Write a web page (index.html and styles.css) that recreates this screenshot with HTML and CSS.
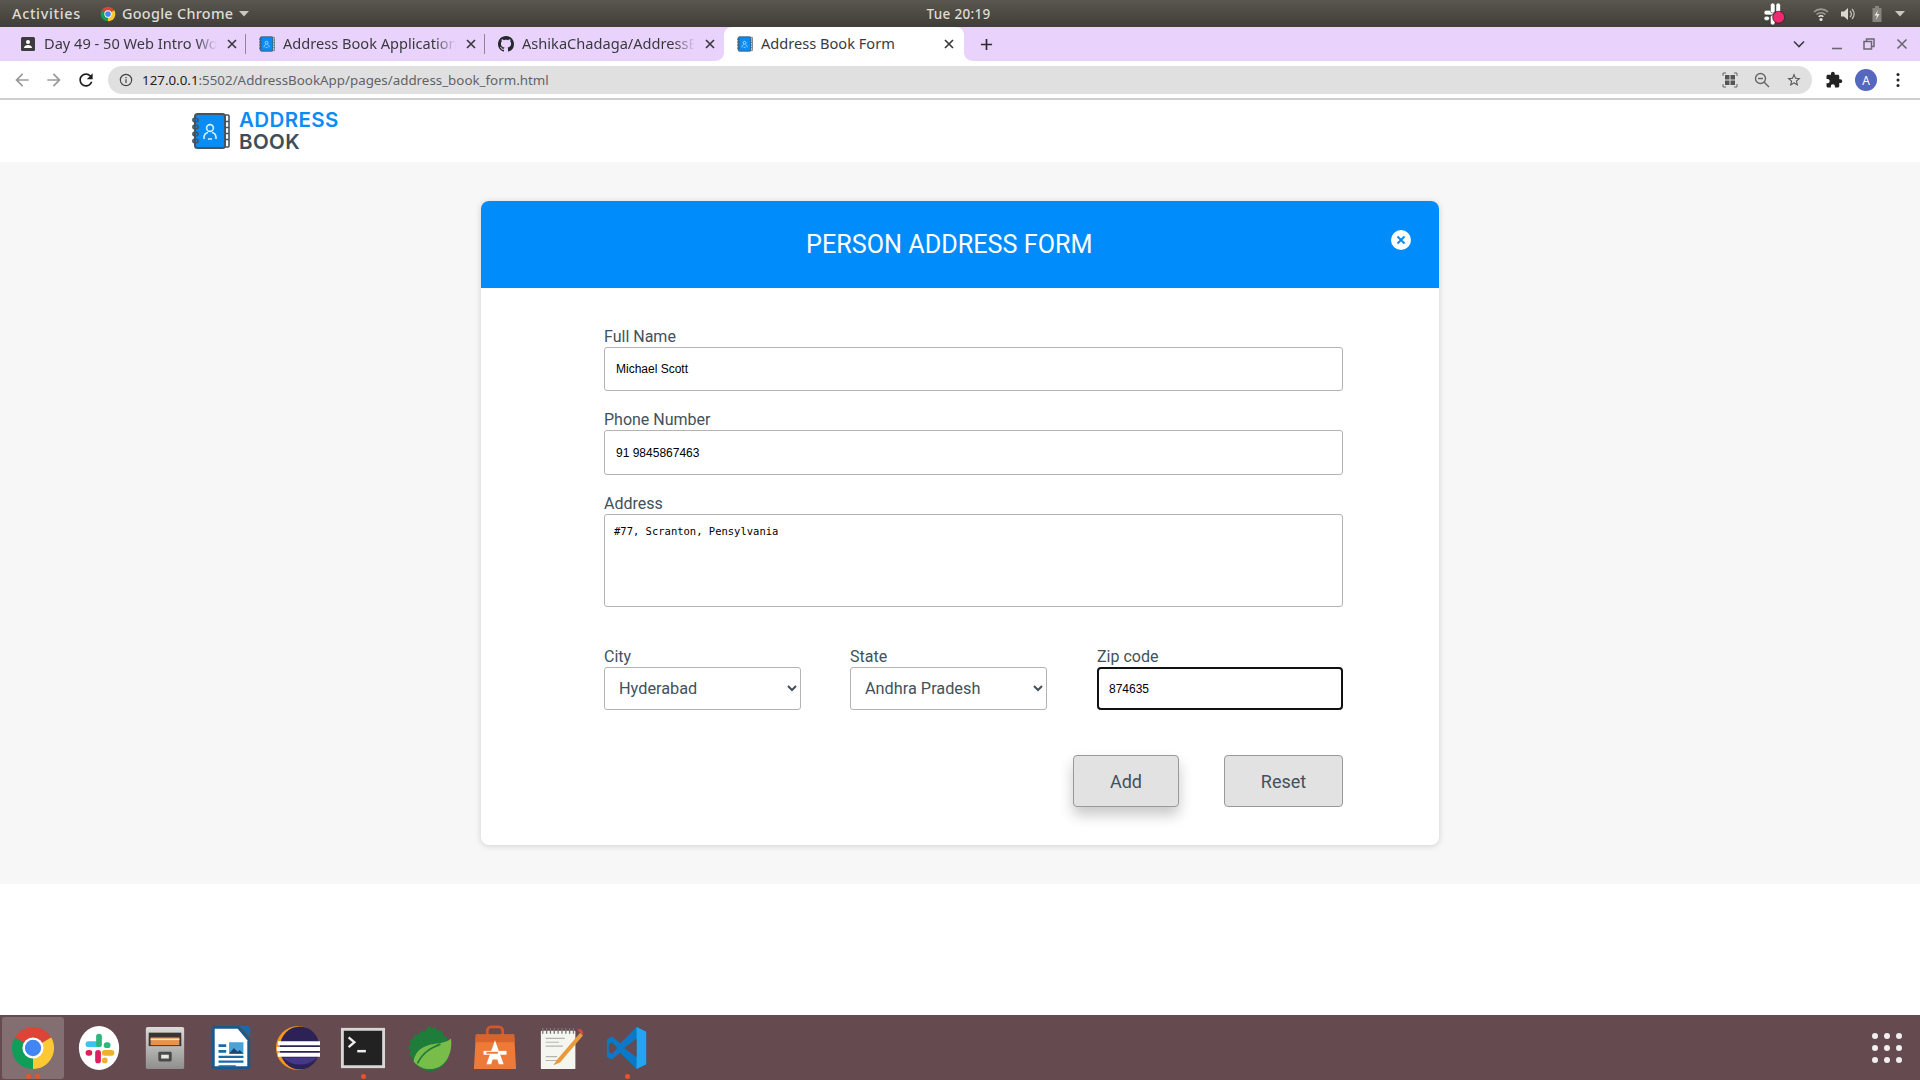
FILE: index.html
```html
<!DOCTYPE html>
<html lang="en">
<head>
<meta charset="utf-8">
<title>Address Book Form</title>
<link rel="stylesheet" href="styles.css">
</head>
<body>
<svg class="defs" width="0" height="0" aria-hidden="true">
  <symbol id="book" viewBox="0 0 38 36">
    <rect x="32" y="2" width="5" height="32" rx="1" fill="#fff" stroke="#46545f" stroke-width="1.6"/>
    <path d="M32 8.5h5M32 14.5h5M32 20.5h5M32 26.5h5" stroke="#46545f" stroke-width="1.4"/>
    <rect x="3" y="1" width="30" height="34" rx="2.5" fill="#0a8cf5" stroke="#46545f" stroke-width="2"/>
    <g fill="none" stroke="#46545f" stroke-width="1.6">
      <ellipse cx="3.5" cy="7" rx="2.6" ry="2"/>
      <ellipse cx="3.5" cy="14" rx="2.6" ry="2"/>
      <ellipse cx="3.5" cy="21" rx="2.6" ry="2"/>
      <ellipse cx="3.5" cy="28" rx="2.6" ry="2"/>
    </g>
    <g fill="none" stroke="#d8f0ff" stroke-width="1.6">
      <circle cx="18" cy="15" r="3.4"/>
      <path d="M12 26v-1.500c0-2.500 2-4.500 4-5M24 26v-1.500c0-2.500-2-4.500-4-5M16 26h4"/>
    </g>
  </symbol>
  <symbol id="chrome" viewBox="0 0 48 48">
    <path d="M24 24L5 13A22 22 0 0 1 43 13Z" fill="#db4437"/>
    <path d="M24 24L43 13A22 22 0 0 1 24 46Z" fill="#fcc934"/>
    <path d="M24 24L24 46A22 22 0 0 1 5 13Z" fill="#0f9d58"/>
    <circle cx="24" cy="24" r="11" fill="#fff"/>
    <circle cx="24" cy="24" r="8.500" fill="#4285f4"/>
  </symbol>
  <symbol id="close" viewBox="0 0 10 10">
    <path d="M1 1l8 8M9 1l-8 8" stroke="currentColor" stroke-width="1.700" fill="none"/>
  </symbol>
</svg>

<div class="screen">
  <header class="topbar">
    <div class="top-left">
      <span class="top-label activities">Activities</span>
      <span class="app-menu">
        <svg class="app-icon"><use href="#chrome"/></svg>
        <span class="top-label app-name">Google Chrome</span>
        <svg class="caret" viewBox="0 0 10 6"><path d="M0 0h10L5 5.500z" fill="#c9c7c0"/></svg>
      </span>
    </div>
    <span class="top-label clock">Tue 20:19</span>
    <div class="top-right">
      <svg class="tray-slack" viewBox="0 0 24 24">
        <g fill="#fff" stroke="#222" stroke-width=".5">
          <rect x="0" y="8" width="11" height="5" rx="2.500"/>
          <rect x="7" y="0" width="5" height="11" rx="2.500"/>
          <rect x="13" y="0" width="5" height="11" rx="2.500"/>
          <rect x="7" y="13" width="5" height="11" rx="2.500"/>
          <rect x="0" y="14.500" width="6" height="4.500" rx="2.200"/>
        </g>
        <circle cx="16" cy="15.500" r="6.500" fill="#f0286f" stroke="#222" stroke-width=".8"/>
      </svg>
      <svg class="tray wifi" viewBox="0 0 16 16">
        <path d="M1 6a10 10 0 0 1 14 0M3.500 8.500a6.500 6.500 0 0 1 9 0" fill="none" stroke="#9b9a94" stroke-width="1.600"/>
        <path d="M5.700 10.700a3.200 3.200 0 0 1 4.600 0" fill="none" stroke="#e6e5e0" stroke-width="1.600"/>
        <circle cx="8" cy="13.500" r="1.600" fill="#e6e5e0"/>
      </svg>
      <svg class="tray sound" viewBox="0 0 16 16">
        <path d="M1 5.500v5h3l4 3.500V2L4 5.500z" fill="#d9d8d2"/>
        <path d="M10 5a4 4 0 0 1 0 6M12 3a7 7 0 0 1 0 10" fill="none" stroke="#bdbcb6" stroke-width="1.300"/>
      </svg>
      <svg class="tray battery" viewBox="0 0 16 16">
        <path d="M6 0h4v2h2.500v14h-9V2H6z" fill="#85847e"/>
        <path d="M9 4L5.500 9.500H8L7 14l3.500-6H8z" fill="#e8e7e2"/>
      </svg>
      <svg class="caret" viewBox="0 0 10 6"><path d="M0 0h10L5 5.500z" fill="#c9c7c0"/></svg>
    </div>
  </header>

  <nav class="tabstrip">
    <div class="tab sep">
      <svg class="favicon" viewBox="0 0 16 16">
        <rect x="1" y="1" width="14" height="14" rx="1.500" fill="#3b3b3f"/>
        <circle cx="8" cy="6" r="2" fill="#fff"/>
        <path d="M4 12c0-2 2-3 4-3s4 1 4 3z" fill="#fff"/>
      </svg>
      <span class="tab-title">Day 49 - 50 Web Intro Wor</span>
      <svg class="tab-close"><use href="#close"/></svg>
    </div>
    <div class="tab sep">
      <svg class="favicon"><use href="#book"/></svg>
      <span class="tab-title">Address Book Application</span>
      <svg class="tab-close"><use href="#close"/></svg>
    </div>
    <div class="tab">
      <svg class="favicon" viewBox="0 0 16 16"><path fill="#24292e" d="M8 0C3.580 0 0 3.580 0 8c0 3.540 2.290 6.530 5.470 7.590.4.070.55-.17.55-.38 0-.19-.01-.82-.01-1.490-2.010.37-2.530-.49-2.690-.94-.09-.23-.48-.94-.82-1.130-.28-.15-.68-.52-.01-.53.63-.01 1.080.58 1.230.82.72 1.210 1.870.87 2.330.66.070-.52.28-.87.51-1.070-1.780-.2-3.640-.89-3.640-3.950 0-.87.31-1.590.82-2.150-.08-.2-.36-1.020.08-2.120 0 0 .67-.21 2.200.82.64-.18 1.320-.27 2-.27.68 0 1.360.09 2 .27 1.530-1.040 2.200-.82 2.200-.82.44 1.100.16 1.920.08 2.120.51.56.82 1.270.82 2.150 0 3.070-1.870 3.750-3.650 3.950.29.25.54.73.54 1.480 0 1.070-.01 1.930-.01 2.200 0 .21.15.46.55.38A8.013 8.013 0 0016 8c0-4.420-3.580-8-8-8z"/></svg>
      <span class="tab-title">AshikaChadaga/AddressB</span>
      <svg class="tab-close"><use href="#close"/></svg>
    </div>
    <div class="tab active">
      <svg class="favicon"><use href="#book"/></svg>
      <span class="tab-title">Address Book Form</span>
      <svg class="tab-close"><use href="#close"/></svg>
    </div>
    <svg class="new-tab" viewBox="0 0 14 14"><path d="M7 1v12M1 7h12" stroke="#2b2b30" stroke-width="1.800"/></svg>
    <div class="win-controls">
      <svg class="win-chevron" viewBox="0 0 12 8"><path d="M1 1.500l5 5 5-5" fill="none" stroke="#3c3c42" stroke-width="1.600"/></svg>
      <svg class="win-btn min" viewBox="0 0 12 12"><path d="M1 10.500h10" stroke="#6b6770" stroke-width="1.600"/></svg>
      <svg class="win-btn restore" viewBox="0 0 12 12"><path d="M3.500 3.500V1h7.500v7.500H8.500M1 3.500h7.500V11H1z" fill="none" stroke="#6b6770" stroke-width="1.500"/></svg>
      <svg class="win-btn closer" viewBox="0 0 12 12"><path d="M1.500 1.500l9 9M10.500 1.500l-9 9" stroke="#6b6770" stroke-width="1.600"/></svg>
    </div>
  </nav>

  <div class="toolbar">
    <svg class="nav-icon" viewBox="0 0 24 24"><path fill="#9a9a9a" d="M20 11H7.830l5.590-5.590L12 4l-8 8 8 8 1.410-1.410L7.830 13H20v-2z"/></svg>
    <svg class="nav-icon" viewBox="0 0 24 24"><path fill="#9a9a9a" d="M4 11h12.170l-5.590-5.590L12 4l8 8-8 8-1.410-1.410L16.170 13H4v-2z"/></svg>
    <svg class="nav-icon" viewBox="0 0 24 24"><path fill="#1f1f1f" d="M17.650 6.350C16.200 4.900 14.210 4 12 4c-4.420 0-7.990 3.580-7.990 8s3.570 8 7.990 8c3.730 0 6.840-2.550 7.730-6h-2.080c-.82 2.330-3.040 4-5.650 4-3.310 0-6-2.690-6-6s2.690-6 6-6c1.660 0 3.140.69 4.220 1.780L13 11h7V4l-2.350 2.350z"/></svg>
    <div class="omnibox">
      <svg class="info" viewBox="0 0 16 16"><circle cx="8" cy="8" r="6.500" fill="none" stroke="#444" stroke-width="1.300"/><path d="M8 7v4.500M8 4.500v1.400" stroke="#444" stroke-width="1.400"/></svg>
      <span class="url"><span class="url-host">127.0.0.1</span>:5502/AddressBookApp/pages/address_book_form.html</span>
      <svg class="omni-icon" viewBox="0 0 16 16">
        <path d="M1 4V1h3M12 1h3v3M15 12v3h-3M4 15H1v-3" fill="none" stroke="#666" stroke-width="1"/>
        <rect x="3" y="3" width="4.500" height="4.500" fill="#555"/><rect x="8.500" y="3" width="4.500" height="4.500" fill="#555"/>
        <rect x="3" y="8.500" width="4.500" height="4.500" fill="#555"/><rect x="8.500" y="8.500" width="4.500" height="4.500" fill="#555"/>
      </svg>
      <svg class="omni-icon" viewBox="0 0 16 16"><circle cx="6.500" cy="6.500" r="5" fill="none" stroke="#666" stroke-width="1.400"/><path d="M4 6.500h5M10.200 10.200L15 15" stroke="#666" stroke-width="1.400"/></svg>
      <svg class="omni-icon" viewBox="0 0 24 24"><path fill="#555" d="M22 9.240l-7.190-.62L12 2 9.190 8.630 2 9.240l5.460 4.730L5.820 21 12 17.270 18.180 21l-1.630-7.030L22 9.240zM12 15.400l-3.760 2.270 1-4.280-3.320-2.880 4.380-.38L12 6.100l1.710 4.040 4.380.38-3.320 2.880 1 4.280L12 15.400z"/></svg>
    </div>
    <svg class="puzzle" viewBox="0 0 24 24"><path fill="#222" d="M20.500 11H19V7c0-1.100-.9-2-2-2h-4V3.500C13 2.120 11.880 1 10.500 1S8 2.120 8 3.500V5H4c-1.100 0-1.990.9-1.990 2v3.800H3.500c1.490 0 2.700 1.210 2.700 2.700s-1.210 2.700-2.700 2.700H2V20c0 1.100.9 2 2 2h3.800v-1.500c0-1.490 1.210-2.700 2.700-2.700 1.490 0 2.700 1.210 2.700 2.700V22H17c1.100 0 2-.9 2-2v-4h1.500c1.380 0 2.500-1.120 2.500-2.500S21.880 11 20.500 11z"/></svg>
    <span class="avatar">A</span>
    <svg class="kebab" viewBox="0 0 4 16"><circle cx="2" cy="2.500" r="1.500" fill="#222"/><circle cx="2" cy="8" r="1.500" fill="#222"/><circle cx="2" cy="13.500" r="1.500" fill="#222"/></svg>
  </div>

  <div class="site-header">
    <svg class="logo-icon"><use href="#book"/></svg>
    <div class="logo-text">
      <span class="logo-a">ADDRESS</span>
      <span class="logo-b">BOOK</span>
    </div>
  </div>

  <main class="page">
    <section class="card">
      <div class="card-head">
        <h1 class="card-title">PERSON ADDRESS FORM</h1>
        <svg class="card-close" viewBox="0 0 20 20">
          <circle cx="10" cy="10" r="10" fill="#fff"/>
          <path d="M6.500 6.500l7 7M13.500 6.500l-7 7" stroke="#0a8cf5" stroke-width="2"/>
        </svg>
      </div>
      <form class="form">
        <div class="field field-name">
          <label class="label" for="name">Full Name</label>
          <input class="input" id="name" type="text" value="Michael Scott">
        </div>
        <div class="field field-phone">
          <label class="label" for="phone">Phone Number</label>
          <input class="input input-phone" id="phone" type="text" value="91 9845867463">
        </div>
        <div class="field field-address">
          <label class="label" for="address">Address</label>
          <textarea class="textarea" id="address">#77, Scranton, Pensylvania</textarea>
        </div>
        <div class="row">
          <div class="field col">
            <label class="label" for="city">City</label>
            <select class="select" id="city"><option>Hyderabad</option></select>
          </div>
          <div class="field col">
            <label class="label" for="state">State</label>
            <select class="select" id="state"><option>Andhra Pradesh</option></select>
          </div>
          <div class="field col-zip">
            <label class="label" for="zip">Zip code</label>
            <input class="input zip" id="zip" type="text" value="874635">
          </div>
        </div>
        <div class="actions">
          <button class="btn btn-add" type="button">Add</button>
          <button class="btn btn-reset" type="button">Reset</button>
        </div>
      </form>
    </section>
  </main>

  <div class="blank"></div>

  <footer class="dock">
    <div class="dock-item running-2 current"><svg class="dock-icon"><use href="#chrome"/></svg></div>
    <div class="dock-item">
      <svg class="dock-icon" viewBox="0 0 48 48">
        <ellipse cx="24" cy="24" rx="21" ry="23" fill="#fff"/>
        <rect x="10" y="17" width="14" height="6" rx="3" fill="#36c5f0"/>
        <rect x="21" y="9" width="6" height="14" rx="3" fill="#2eb67d"/>
        <rect x="29" y="18" width="7" height="6" rx="3" fill="#2eb67d"/>
        <rect x="10" y="26" width="7" height="6" rx="3" fill="#e01e5a"/>
        <rect x="20" y="26" width="6" height="14" rx="3" fill="#e01e5a"/>
        <rect x="27" y="26" width="13" height="6" rx="3" fill="#ecb22e"/>
        <rect x="27" y="34" width="6" height="6" rx="3" fill="#ecb22e"/>
      </svg>
    </div>
    <div class="dock-item">
      <svg class="dock-icon" viewBox="0 0 48 48">
        <defs><linearGradient id="cab" x1="0" y1="0" x2="0" y2="1"><stop offset="0" stop-color="#dcdcda"/><stop offset="1" stop-color="#8e8e8c"/></linearGradient></defs>
        <rect x="4" y="2" width="40" height="44" rx="2" fill="url(#cab)"/>
        <rect x="7" y="8" width="34" height="14" fill="#3b3633"/>
        <rect x="9" y="13" width="30" height="8" fill="#e8924a"/>
        <path d="M9 15h30" stroke="#fbe6c8" stroke-width="1.500"/>
        <rect x="17" y="28" width="14" height="10" rx="1.500" fill="#4a4a48"/>
        <rect x="20" y="31" width="8" height="4" fill="#e8e8e6"/>
      </svg>
    </div>
    <div class="dock-item">
      <svg class="dock-icon" viewBox="0 0 48 48">
        <path d="M6 1h26l12 14v29a2 2 0 0 1-2 2H6a2 2 0 0 1-2-2V3a2 2 0 0 1 2-2z" fill="#1a5a8a"/>
        <path d="M7 4h24l10 12v27H7z" fill="#fff"/>
        <path d="M33 1h9a2 2 0 0 1 2 2v10z" fill="#1a6aa6"/>
        <path d="M11 20h8v3h-8zM11 26h8v3h-8zM11 32h26v2.500H11zM11 37h26v2.500H11zM11 42h18v2H11z" fill="#1a6aa6"/>
        <rect x="22" y="18" width="15" height="12" fill="#4aa3d8"/>
        <path d="M22 30l5-6 4 4 2-2 4 4z" fill="#1c4a66"/>
      </svg>
    </div>
    <div class="dock-item">
      <svg class="dock-icon" viewBox="0 0 48 48">
        <circle cx="25" cy="24" r="23" fill="#f7941e"/>
        <ellipse cx="27" cy="24" rx="21" ry="22.500" fill="#2c2255"/>
        <path d="M9 34a21 15 0 0 0 36 0z" fill="#473788"/>
        <path d="M4 17h44v4H4zM3 23h45v4H3zM4 29h44v4H4z" fill="#fff"/>
      </svg>
    </div>
    <div class="dock-item running">
      <svg class="dock-icon" viewBox="0 0 48 48">
        <rect x="1" y="3" width="46" height="42" fill="#d7d7d5"/>
        <rect x="4" y="6" width="40" height="36" fill="#222"/>
        <path d="M9 13l6 5-6 5" fill="none" stroke="#eee" stroke-width="2.400"/>
        <rect x="18" y="26" width="9" height="2.600" fill="#eee"/>
      </svg>
    </div>
    <div class="dock-item">
      <svg class="dock-icon" viewBox="0 0 48 48">
        <path d="M24 1l3 3 4-2 2 4 5 0 1 5 4 2-1 5 3 4-1 12c-2 8-10 13-18 14-10 0-17-6-20-14l-3-3 2-4-3-4 3-3-1-4 4-2 1-4 4 0 2-4 4 1z" fill="#1e7d3a"/>
        <path d="M47 14c2 16-6 32-22 32-8 0-14-4-17-8 2-14 14-18 27-19 5-1 9-2 12-5z" fill="#78bc4a"/>
        <path d="M12 40c6-12 14-16 24-20" fill="none" stroke="#1e7d3a" stroke-width="1.800"/>
      </svg>
    </div>
    <div class="dock-item">
      <svg class="dock-icon" viewBox="0 0 48 48">
        <path d="M16 12V6a4 4 0 0 1 4-4h8a4 4 0 0 1 4 4v6" fill="none" stroke="#d5562a" stroke-width="3"/>
        <path d="M4 10h40l2 36H2z" fill="#ee7a3a"/>
        <path d="M4 10h40l.5 8h-41z" fill="#d9642b"/>
        <path d="M24 16l-9 25h5l1.500-5h5l1.500 5h5z" fill="#fff"/>
        <rect x="12" y="27" width="24" height="4" fill="#fff"/>
        <rect x="15" y="28" width="12" height="2" fill="#ee7a3a"/>
      </svg>
    </div>
    <div class="dock-item">
      <svg class="dock-icon" viewBox="0 0 48 48">
        <rect x="3" y="6" width="36" height="40" rx="1" fill="#f6f6f0"/>
        <path d="M5 3v6M9 3v6M13 3v6M17 3v6M21 3v6M25 3v6M29 3v6M33 3v6M37 3v6" stroke="#777" stroke-width="1.400"/>
        <path d="M8 14h20M8 18h14M8 22h18M8 33h12M8 37h16" stroke="#b5b5b0" stroke-width="1.200"/>
        <path d="M44 8l-24 28-4 6 7-3 24-28z" fill="#e89a3c"/>
        <path d="M41 5l5 5 1-1c1-2-2-5-4-5z" fill="#d44a4a"/>
      </svg>
    </div>
    <div class="dock-item running">
      <svg class="dock-icon" viewBox="0 0 48 48">
        <path d="M34 2l10 5v34l-10 5-17-17-9 7-5-3V15l5-3 9 7z" fill="#0a7ac8"/>
        <path d="M34 2l10 5v34l-10 5z" fill="#23a5ef"/>
        <path d="M34 14L21 24l13 10z" fill="#654a4f"/>
        <path d="M8 18l-3 2v8l3 2 6-6z" fill="#654a4f"/>
      </svg>
    </div>
    <svg class="apps-grid" viewBox="0 0 30 30">
      <g fill="#f2efef">
        <circle cx="3" cy="3" r="3"/><circle cx="15" cy="3" r="3"/><circle cx="27" cy="3" r="3"/>
        <circle cx="3" cy="15" r="3"/><circle cx="15" cy="15" r="3"/><circle cx="27" cy="15" r="3"/>
        <circle cx="3" cy="27" r="3"/><circle cx="15" cy="27" r="3"/><circle cx="27" cy="27" r="3"/>
      </g>
    </svg>
  </footer>
</div>
</body>
</html>
```

FILE: styles.css
```css
* { box-sizing: border-box; }
html, body { margin: 0; padding: 0; }
body { font-family: "Roboto", "Liberation Sans", sans-serif; background: #fff; }
.defs { position: absolute; }
.screen { width: 1920px; height: 1080px; display: flex; flex-direction: column; overflow: hidden; }

/* GNOME top bar */
.topbar {
  height: 27px; flex: none;
  display: grid; grid-template-columns: 1fr auto 1fr; align-items: center;
  padding: 0 15px 0 12px;
  background: linear-gradient(#5a5750, #3f3d37);
}
.top-left { display: flex; align-items: center; gap: 19px; }
.top-label { font-family: "Noto Sans", sans-serif; font-size: 14.4px; font-weight: 500; color: #dedcd5; letter-spacing: .45px; }
.activities { letter-spacing: .7px; }
.app-name { letter-spacing: .3px; }
.clock { font-size: 13.5px; letter-spacing: .3px; }
.app-menu { display: flex; align-items: center; gap: 6px; }
.app-icon { width: 16px; height: 16px; }
.caret { width: 10px; height: 6px; }
.top-right { display: flex; align-items: center; justify-content: flex-end; }
.tray-slack { width: 22px; height: 22px; margin-right: 27px; }
.tray { width: 16px; height: 16px; margin-right: 11px; }
.sound { margin-right: 13px; }
.battery { margin-right: 10px; }

/* Tabs */
.tabstrip { height: 34px; flex: none; display: flex; align-items: stretch; padding-left: 7px; background: #e9d3fd; }
.tab { width: 239px; display: flex; align-items: center; padding: 0 9px 0 13px; gap: 8px; position: relative; }
.tab.sep::after { content: ""; position: absolute; right: 0; top: 7px; bottom: 7px; width: 1px; background: #8f8596; }
.tab.active { width: 240px; padding-right: 10px; background: #fff; border-radius: 8px 8px 0 0; }
.tab.active::before, .tab.active::after {
  content: ""; position: absolute; bottom: 0; width: 8px; height: 8px;
}
.tab.active::before { left: -8px; background: radial-gradient(circle at 0 0, transparent 7.5px, #fff 8px); }
.tab.active::after { right: -8px; background: radial-gradient(circle at 100% 0, transparent 7.5px, #fff 8px); }
.favicon { width: 16px; height: 16px; flex: none; }
.tab-title {
  flex: 1; min-width: 0; white-space: nowrap; padding-bottom: 2px;
  font-family: "Noto Sans", sans-serif; font-size: 14.6px; color: #3a3a3e;
  -webkit-mask-image: linear-gradient(to right, #000 88%, transparent 100%);
  mask-image: linear-gradient(to right, #000 88%, transparent 100%);
}
.tab.active .tab-title { -webkit-mask-image: none; mask-image: none; }
.tab-close { width: 10px; height: 10px; flex: none; color: #3a3a3e; margin-left: 2px; }
.new-tab { width: 13px; height: 13px; margin: auto 0 auto 16px; flex: none; }
.win-controls { margin-left: auto; display: flex; align-items: center; padding-right: 12px; }
.win-chevron { width: 12px; height: 8px; margin-right: 26px; }
.win-btn { width: 12px; height: 12px; }
.min { margin-right: 20px; }
.restore { margin-right: 21px; }

/* Browser toolbar */
.toolbar {
  height: 39px; flex: none; display: flex; align-items: center;
  padding: 1px 13px 0 12px; background: #fff; border-bottom: 2px solid #cfcfcf;
}
.nav-icon { width: 20px; height: 20px; margin-right: 12px; flex: none; }
.omnibox {
  width: 1704px; height: 28px; flex: none;
  display: flex; align-items: center; padding: 0 10px 0 11px;
  border-radius: 14px; background: #e0e0e0;
}
.info { width: 14px; height: 14px; margin-right: 9px; flex: none; }
.url { font-family: "Noto Sans", sans-serif; font-size: 13.35px; color: #5f6368; flex: 1; white-space: nowrap; }
.url-host { color: #222; }
.omni-icon { width: 16px; height: 16px; margin-left: 16px; flex: none; }
.puzzle { width: 18px; height: 18px; margin-left: 13px; flex: none; }
.avatar {
  width: 22px; height: 22px; border-radius: 50%; margin-left: 12px; flex: none;
  display: flex; align-items: center; justify-content: center;
  background: #5468c0; color: #fff; font-family: "Noto Sans", sans-serif; font-size: 12px;
}
.kebab { width: 4px; height: 16px; margin-left: 19px; flex: none; }

/* Site header */
.site-header { height: 62px; flex: none; display: flex; align-items: center; gap: 9px; padding-left: 192px; background: #fff; }
.logo-icon { width: 38px; height: 36px; flex: none; }
.logo-text { display: flex; flex-direction: column; font-family: "Inter", sans-serif; font-weight: 600; font-size: 20.5px; letter-spacing: .4px; line-height: 22px; }
.logo-a { color: #0a8cf5; }
.logo-b { color: #3f4d58; }

/* Page and card */
.page { height: 722px; flex: none; padding-top: 39px; background: #f7f7f7; }
.card {
  width: 958px; height: 644px; margin: 0 auto; background: #fff;
  border-radius: 8px; box-shadow: 0 1px 6px rgba(0, 0, 0, .16);
}
.card-head {
  height: 87px; display: flex; align-items: center;
  padding: 0 28px 0 325px; background: #008cfb; border-radius: 8px 8px 0 0;
}
.card-title { margin: 0; font-size: 25.2px; font-weight: 400; color: #fff; }
.card-close { width: 20px; height: 20px; margin: -9px 0 0 auto; flex: none; }

.form { display: flex; flex-direction: column; width: 739px; margin-left: 123px; padding-top: 38px; }
.field { display: flex; flex-direction: column; }
.field-phone { margin-top: 18px; }
.field-address { margin-top: 18px; }
.label { height: 21px; font-size: 16px; line-height: 21px; color: #42515b; }
.input {
  height: 44px; width: 100%; padding: 0 11px; border: 1px solid #b3b3b3; border-radius: 3px;
  font-family: "Liberation Sans", sans-serif; font-size: 12px; color: #000; background: #fff; outline: none;
}
.input-phone { height: 45px; }
.textarea {
  display: block; height: 93px; width: 100%; padding: 10px 9px; border: 1px solid #b3b3b3; border-radius: 3px;
  font-family: "DejaVu Sans Mono", monospace; font-size: 10.5px; color: #000; background: #fff; resize: none; outline: none;
}
.row { display: flex; margin-top: 39px; }
.col { width: 197px; margin-right: 49px; }
.col-zip { width: 246px; margin-left: 1px; }
.select {
  height: 43px; width: 100%; padding: 0 10px; border: 1px solid #b3b3b3; border-radius: 3px;
  font-family: "Roboto", sans-serif; font-size: 16.3px; color: #42515b; background: #fff; outline: none;
}
.zip { height: 43px; border: 2px solid #111; border-radius: 4px; padding: 0 10px; }
.actions { display: flex; justify-content: flex-end; gap: 45px; margin-top: 45px; }
.btn {
  height: 52px; border: 1px solid #999; border-radius: 4px; background: #e2e2e2;
  font-family: "Roboto", sans-serif; font-size: 18px; color: #42515b;
}
.btn-add { width: 106px; box-shadow: 0 8px 14px rgba(0, 0, 0, .22); }
.btn-reset { width: 119px; }

.blank { flex: 1; background: #fff; }

/* Dock */
.dock { height: 65px; flex: none; display: flex; align-items: center; background: #654a4f; }
.dock-item { width: 66px; height: 62px; flex: none; display: flex; align-items: center; justify-content: center; position: relative; }
.dock-icon { width: 46px; height: 46px; }
.current { width: 62px; margin: 0 2px; background: rgba(255, 255, 255, .2); border-radius: 3px; }
.running::after, .running-2::after {
  content: ""; position: absolute; bottom: 0; left: 50%; width: 5px; height: 5px; margin-left: -2.5px;
  border-radius: 50%; background: #e95420;
}
.running-2::after { margin-left: -7px; box-shadow: 9px 0 0 #e95420; }
.apps-grid { width: 30px; height: 30px; margin-left: auto; margin-right: 18px; flex: none; }
```
